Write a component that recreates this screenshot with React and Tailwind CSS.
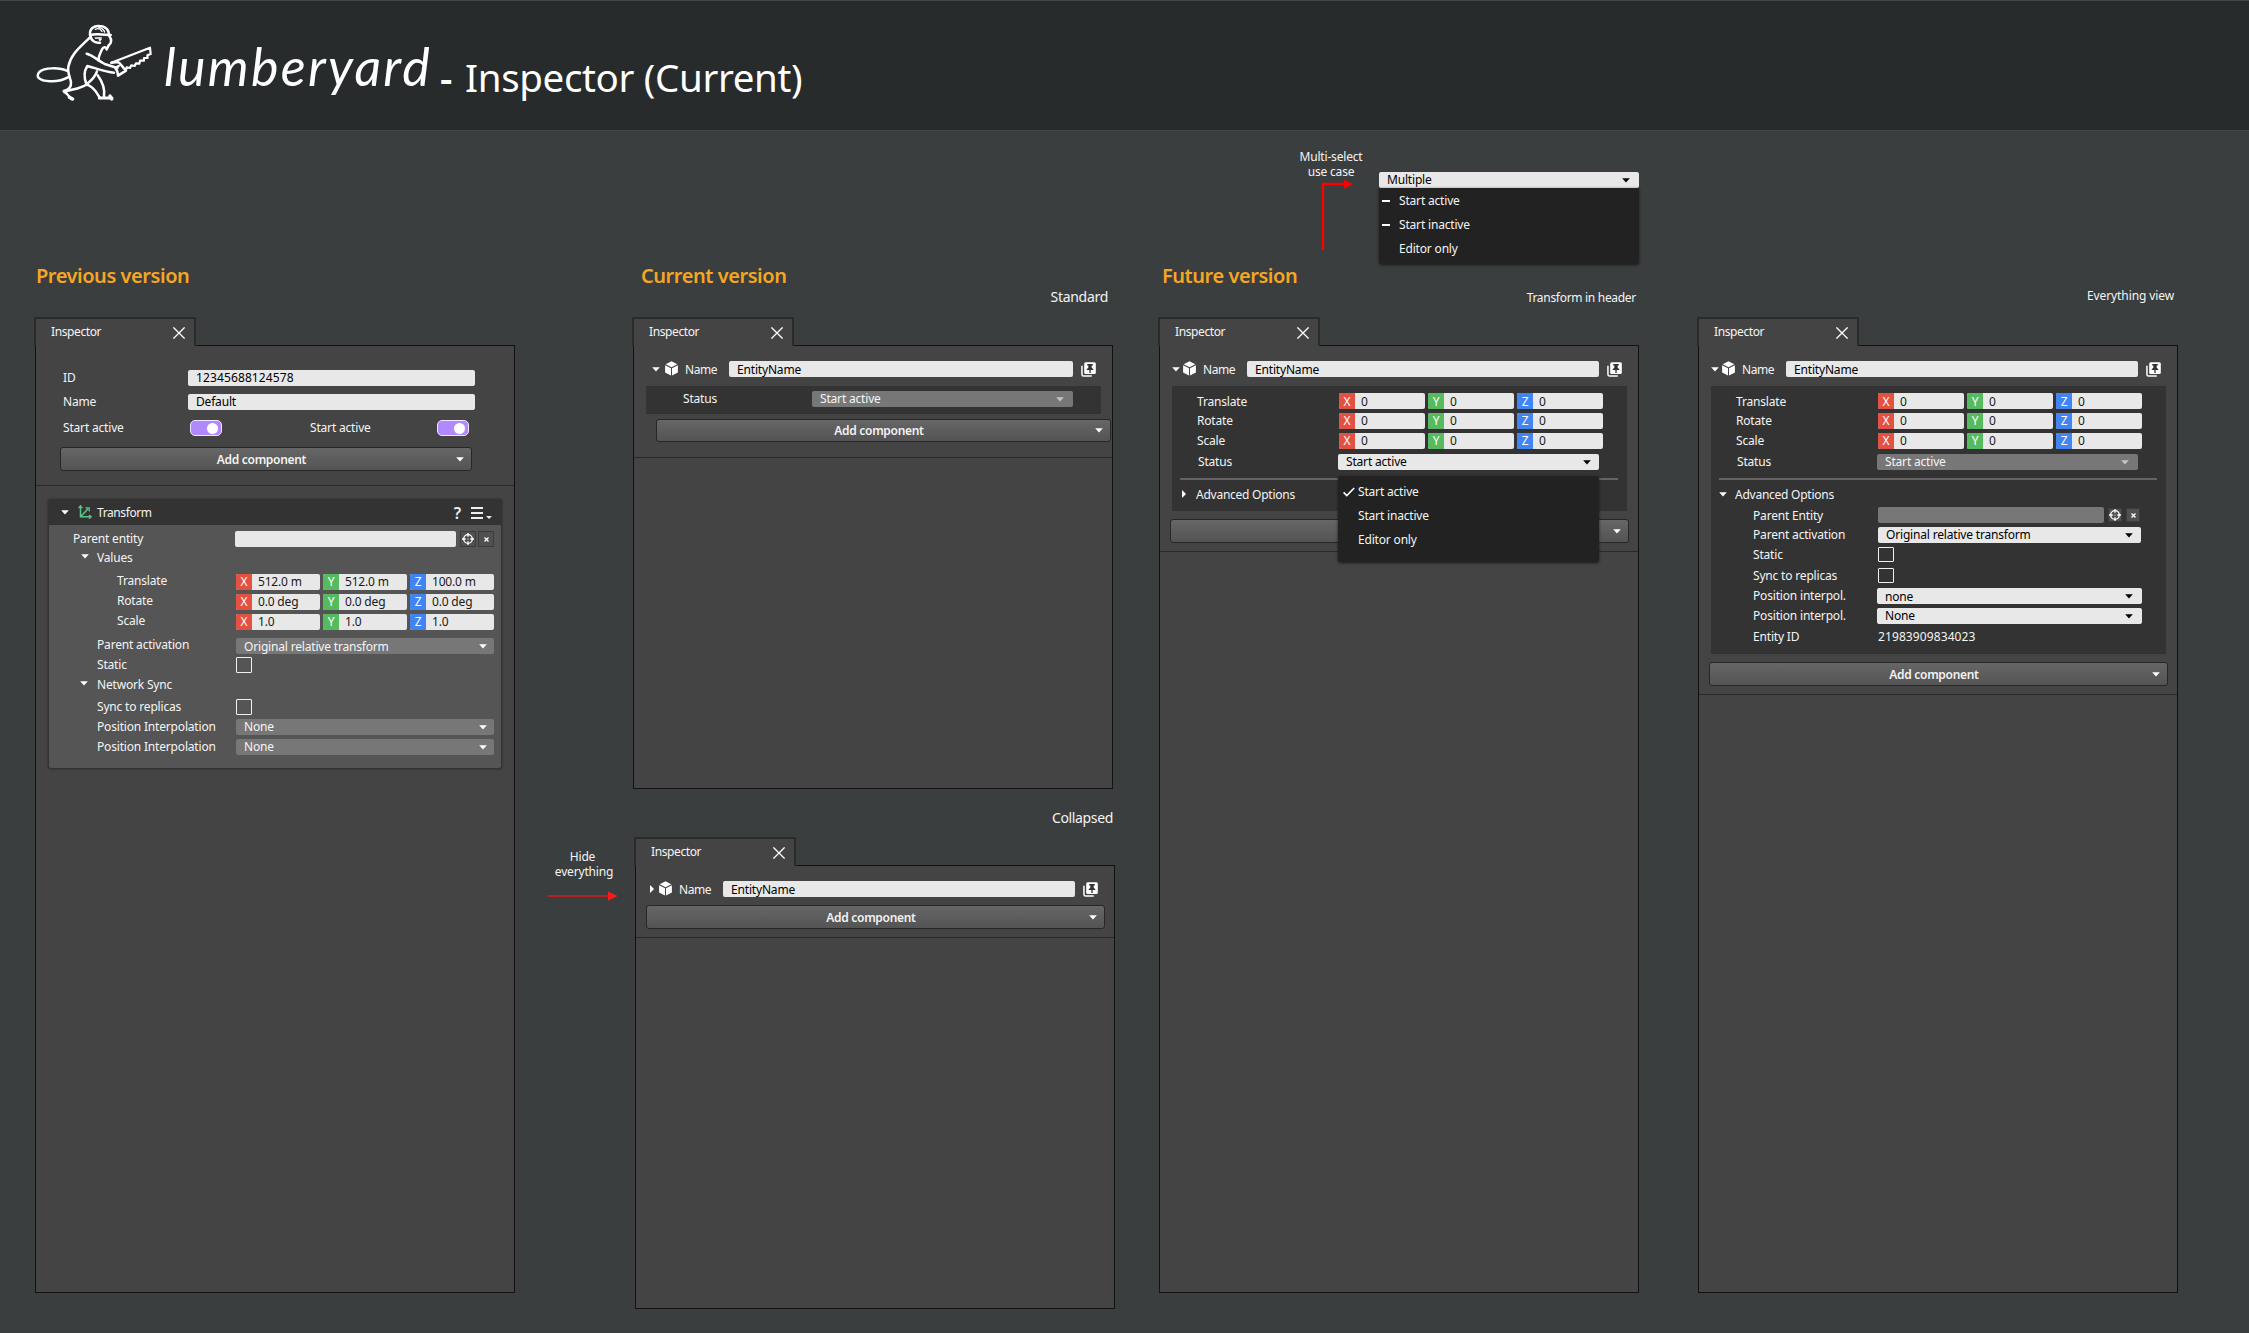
import React from "react";

const FONT = "font-['Noto_Sans','Open_Sans',sans-serif]";

/* ---------- icons ---------- */

function Down({ className = "text-white" }) {
  return (
    <svg viewBox="0 0 8 5" className={`h-[5px] w-2 shrink-0 ${className}`}>
      <path d="M0.2 0.3H7.8L4 4.6Z" fill="currentColor" />
    </svg>
  );
}

function Right() {
  return (
    <svg viewBox="0 0 4 8" className="h-2 w-1 shrink-0 text-white">
      <path d="M0 0L4 4L0 8Z" fill="currentColor" />
    </svg>
  );
}

function Close() {
  return (
    <svg viewBox="0 0 12 12" className="size-3 shrink-0">
      <path d="M0.4 0.4L11.6 11.6M11.6 0.4L0.4 11.6" stroke="#fff" strokeWidth="1.3" />
    </svg>
  );
}

function Cube() {
  return (
    <svg viewBox="0 0 13 15" className="h-[15px] w-[13px] shrink-0">
      <path d="M6.5 0.2L12.3 3.3L6.5 6.3L0.7 3.3Z" fill="#fff" />
      <path d="M0.1 4.2L6 7.2V14.4L0.1 11.4Z" fill="#fff" />
      <path d="M12.9 4.2L7 7.2V14.4L12.9 11.4Z" fill="#fff" />
    </svg>
  );
}

function Pin() {
  return (
    <svg viewBox="0 0 16 16" className="ml-2 size-[15px] shrink-0">
      <path d="M1 4V13.2Q1 15 2.8 15H11.5" fill="none" stroke="#fff" strokeWidth="1.6" />
      <rect x="3.4" y="0.2" width="12.4" height="12.6" rx="1.6" fill="#fff" />
      <path d="M6.6 2.2H12.6V3.6H11.4V6L13.2 7.6V8.6H10.3V11.6H8.9V8.6H6V7.6L7.8 6V3.6H6.6Z" fill="#333" />
    </svg>
  );
}

function Axes() {
  return (
    <svg viewBox="0 0 14 14" className="size-3.5 shrink-0" fill="none" stroke="#5ec48a" strokeWidth="1.5">
      <path d="M2.5 2V11.8H12M2.5 11.8L10.3 3.6" />
      <path d="M0.6 3.2L2.5 0.8L4.4 3.2M11 9.9L13.3 11.8L11 13.7M7.4 2.8H11.2V6.4" strokeWidth="1.3" />
    </svg>
  );
}

function Target() {
  return (
    <svg viewBox="0 0 12 12" className="size-3 shrink-0" fill="none" stroke="#fff">
      <circle cx="6" cy="6" r="4.3" strokeWidth="1.3" />
      <path d="M6 0V3.7M6 8.3V12M0 6H3.7M8.3 6H12" strokeWidth="1.3" />
      <circle cx="6" cy="6" r="0.6" fill="#fff" stroke="none" />
    </svg>
  );
}

function SmallX() {
  return (
    <svg viewBox="0 0 5 5" className="size-[5px] shrink-0">
      <path d="M0.5 0.5L4.5 4.5M4.5 0.5L0.5 4.5" stroke="#fff" strokeWidth="1.3" />
    </svg>
  );
}

function Beaver() {
  return (
    <svg
      viewBox="0 0 372 255"
      className="h-[85px] w-[124px] shrink-0"
      fill="none"
      stroke="#fff"
      strokeWidth="7.5"
      strokeLinecap="round"
      strokeLinejoin="round"
    >
      <path d="M112 159C90 148 42 148 28 162C16 176 26 188 60 190C84 191 104 184 118 176" />
      <path d="M180 58C150 88 122 108 115 146C112 166 121 180 123 192C124 206 118 216 101 219L111 228L124 243" />
      <path d="M103 222C124 214 152 212 168 200C184 188 196 176 201 160" />
      <path d="M170 201C160 176 164 156 172 144C196 150 226 162 252 164" />
      <path d="M170 107C190 112 204 128 224 138L262 150" />
      <path d="M172 200C196 210 200 226 209 238" />
      <path d="M203 172C216 190 226 212 222 236" />
      <path d="M208 240H246" strokeWidth="9" />
      <path d="M240 234L245 243M118 238L128 243" strokeWidth="10" />
      <path d="M180 50C178 32 194 22 208 24C226 24 238 36 236 50" />
      <path d="M180 51C198 46 222 50 242 51" />
      <path d="M196 34C204 30 212 34 216 40M206 28C218 30 222 36 224 42" strokeWidth="4" />
      <path d="M182 54C182 68 196 76 210 74M238 54C246 66 244 76 236 82L230 94C228 88 222 84 216 94C210 108 204 116 206 128" />
      <path d="M196 60H214" strokeWidth="4" />
      <circle cx="210" cy="65" r="3" fill="#fff" strokeWidth="2" />
      <path d="M244 134L360 89L362 108L352 112L353 120L342 120L342 128L330 128L328 137L318 136L314 144L304 142L300 150L290 148L288 156" strokeWidth="6.5" />
      <path d="M244 134L264 132C272 136 276 146 288 158L264 173L262 160L256 150L266 144" />
    </svg>
  );
}

/* ---------- controls ---------- */

function Label({ w, up = "", children }) {
  return <div className={`shrink-0 whitespace-nowrap text-[#f4f4f4] ${w} ${up}`}>{children}</div>;
}

function Field({ w, tone = "bg-[#e8e8e8]", className = "", children }) {
  return (
    <div className={`flex h-4 shrink-0 items-center rounded-[2px] pl-2 text-black ${w} ${tone} ${className}`}>
      {children}
    </div>
  );
}

function Select({ w, dim, faint, pr = "pr-[7px]", pt = "", children }) {
  return (
    <div
      className={`flex h-4 shrink-0 items-center justify-between rounded-[2px] pl-2 ${pr} ${w} ${
        dim ? "bg-[#777] text-[#f4f4f4]" : "bg-[#e8e8e8] text-black"
      }`}
    >
      <span className={pt}>{children}</span>
      <Down className={faint ? "text-[#c4c4c4]" : dim ? "text-white" : "text-black"} />
    </div>
  );
}

function Vector({ values, w, pt = "" }) {
  const tones = ["bg-[#e25141]", "bg-[#56bb5f]", "bg-[#4185f4]"];
  return (
    <div className="flex gap-[3px]">
      {values.map((v, i) => (
        <div key={i} className={`flex h-4 overflow-hidden rounded-[2px] bg-[#e8e8e8] ${w}`}>
          <div className={`flex w-4 items-center justify-center text-white ${tones[i]} ${pt}`}>{"XYZ"[i]}</div>
          <div className={`flex items-center pl-1.5 text-[#1a1a1a] ${pt}`}>{v}</div>
        </div>
      ))}
    </div>
  );
}

function Check({ h = "h-4" }) {
  return <div className={`w-4 shrink-0 rounded-[1px] border border-[#f0f0f0] ${h}`} />;
}

function Toggle() {
  return (
    <div className="flex h-4 w-8 shrink-0 items-center justify-end rounded-[5px] border border-[#efe6ff] bg-[#b288ff] pr-[3px]">
      <div className="size-[11px] rounded-full bg-white" />
    </div>
  );
}

function IconButton({ size, children }) {
  return (
    <div className={`flex shrink-0 items-center justify-center border border-[#3c3c3c] bg-[#505050] ${size}`}>
      {children}
    </div>
  );
}

function AddButton({ className, label = "Add component" }) {
  return (
    <div
      className={`flex items-center rounded-[3px] border border-[#272727] bg-linear-to-b from-[#666] to-[#545454] pr-[7px] pl-1.5 ${className}`}
    >
      <span className="flex-1 pt-px text-center font-semibold tracking-[-0.3px] text-[#f2f2f2]">{label}</span>
      <Down />
    </div>
  );
}

function Rule({ mt }) {
  return <div className={`h-px bg-[#2a2a2a] ${mt}`} />;
}

function Panel({ h, children }) {
  return (
    <div className="w-[481px]">
      <div className="relative z-10 -mb-px flex h-[29px] w-[162px] items-center border-x-2 border-t-2 border-[#2a2b2b] bg-[#444] pr-[9px] pl-[15px]">
        <span className="flex-1 pb-[2px] tracking-[-0.4px] text-[#f4f4f4]">Inspector</span>
        <Close />
      </div>
      <div className={`ml-px w-[480px] border border-[#111] bg-[#444] ${h}`}>{children}</div>
    </div>
  );
}

function NameRow({ pl, arrow, gap, w, field }) {
  return (
    <div className={`mt-[15px] flex h-4 items-center ${pl}`}>
      {arrow}
      <div className={`pb-[2px] ${gap}`}>
        <Cube />
      </div>
      <Label w={`ml-[7px] tracking-[-0.4px] ${w}`} up="pt-px">Name</Label>
      <Field w={field} className="pt-[2px]">EntityName</Field>
      <Pin />
    </div>
  );
}

function TransformRows() {
  return (
    <>
      {["Translate", "Rotate", "Scale"].map((name, i) => (
        <div key={name} className={`flex h-4 items-center pl-[25px] ${i ? "mt-1" : "mt-[7px]"}`}>
          <Label w="w-[142px]" up={i ? "" : "pt-[2px]"}>
            {name}
          </Label>
          <Vector w="w-[86px]" values={["0", "0", "0"]} pt={i ? "" : "pt-[2px]"} />
        </div>
      ))}
    </>
  );
}

function Heading({ ml, children }) {
  return (
    <div className={`h-7 pt-px text-[20px] leading-7 font-semibold tracking-[-0.45px] text-[#f5a623] ${ml}`}>
      {children}
    </div>
  );
}

/* ---------- columns ---------- */

function PreviousVersion() {
  return (
    <div className="ml-[34px] w-[481px]">
      <div className="h-[186px] pt-[130px]">
        <Heading ml="ml-[2px]">Previous version</Heading>
      </div>
      <Panel h="h-[948px]">
        <div className="mt-6 flex h-4 items-center pl-[27px]">
          <Label w="w-[125px]">ID</Label>
          <Field w="w-[287px]" className="tracking-[0.12px]">12345688124578</Field>
        </div>
        <div className="mt-2 flex h-4 items-center pl-[27px]">
          <Label w="w-[125px]">Name</Label>
          <Field w="w-[287px]">Default</Field>
        </div>
        <div className="mt-2.5 flex h-4 items-center pl-[27px]">
          <Label w="w-[127px]">Start active</Label>
          <Toggle />
          <Label w="ml-[88px] w-[127px]">Start active</Label>
          <Toggle />
        </div>
        <AddButton className="mt-[11px] ml-6 h-6 w-[412px]" />
        <Rule mt="mt-[14px]" />
        <div className="mt-[13px] ml-3 h-[270px] w-[454px] rounded-[3px] border border-[#333] bg-[#555] shadow-[0_0_2px_#222]">
          <div className="flex h-[25px] items-center bg-[#333] pr-[9px] pl-3">
            <Down />
            <div className="ml-[9px] pb-px">
              <Axes />
            </div>
            <Label w="ml-[5px] flex-1 tracking-[-0.4px]">Transform</Label>
            <span className="mr-2.5 text-[16px] font-semibold text-[#eee]">?</span>
            <div className="flex w-3 flex-col gap-[3px]">
              <div className="h-[2px] bg-[#eee]" />
              <div className="h-[2px] bg-[#eee]" />
              <div className="h-[2px] bg-[#eee]" />
            </div>
            <svg viewBox="0 0 6 3" className="mt-2.5 ml-[3px] h-[3px] w-1.5">
              <path d="M0 0H6L3 3Z" fill="#eee" />
            </svg>
          </div>
          <div className="mt-1.5 flex h-4 items-center pl-6">
            <Label w="w-[162px]">Parent entity</Label>
            <Field w="w-[221px]" />
            <div className="ml-1 flex gap-[2px]">
              <IconButton size="size-4"><Target /></IconButton>
              <IconButton size="size-4"><SmallX /></IconButton>
            </div>
          </div>
          <div className="mt-[2px] flex h-4 items-center pl-8">
            <div className="pb-[2px]">
              <Down />
            </div>
            <Label w="ml-2" up="pt-[2px]">Values</Label>
          </div>
          {[
            ["Translate", ["512.0 m", "512.0 m", "100.0 m"], "mt-[9px]"],
            ["Rotate", ["0.0 deg", "0.0 deg", "0.0 deg"], "mt-1"],
            ["Scale", ["1.0", "1.0", "1.0"], "mt-1"],
          ].map(([name, values, mt]) => (
            <div key={name} className={`flex h-4 items-center pl-[68px] ${mt}`}>
              <Label w="w-[119px]" up="pb-[2px]">{name}</Label>
              <Vector w="w-[84px]" values={values} />
            </div>
          ))}
          <div className="mt-2 flex h-4 items-center pl-12">
            <Label w="w-[139px]" up="pb-[2px]">Parent activation</Label>
            <Select w="w-[258px]" dim pt="pt-px">Original relative transform</Select>
          </div>
          <div className="mt-[3px] flex h-4 items-center pl-12">
            <Label w="w-[139px]">Static</Label>
            <Check />
          </div>
          <div className="mt-[3px] flex h-4 items-center pl-[31px]">
            <div className="pb-[2px]">
              <Down />
            </div>
            <Label w="ml-[9px]" up="pt-[2px]">Network Sync</Label>
          </div>
          <div className="mt-[7px] flex h-4 items-center pl-12">
            <Label w="w-[139px]">Sync to replicas</Label>
            <Check />
          </div>
          {[0, 1].map((i) => (
            <div key={i} className="mt-1 flex h-4 items-center pl-12">
              <Label w="w-[139px]">Position Interpolation</Label>
              <Select w="w-[258px]" dim>None</Select>
            </div>
          ))}
        </div>
      </Panel>
    </div>
  );
}

function HideNote() {
  return (
    <div className="w-[117px] pt-[718px] pl-[33px]">
      <div className="w-[72px] text-center leading-[15px] text-[#f4f4f4]">
        <span className="pr-[3px]">Hide</span>
        <br />
        everything
      </div>
      <svg viewBox="0 0 70 10" className="mt-3 h-2.5 w-[70px]">
        <path d="M0 5H61" stroke="#dd1b1b" strokeWidth="1.5" />
        <path d="M60 0.5L69.5 5L60 9.5Z" fill="#ff1a1a" />
      </svg>
    </div>
  );
}

function CurrentVersion() {
  return (
    <div className="w-[483px]">
      <div className="h-[186px] pt-[130px]">
        <Heading ml="ml-[9px]">Current version</Heading>
        <div className="pr-[7px] text-right text-[14px] leading-4 tracking-[-0.3px] text-[#f4f4f4]">Standard</div>
      </div>
      <Panel h="h-[444px]">
        <NameRow pl="pl-[18px]" arrow={<Down />} gap="ml-[5px]" w="w-11" field="w-[344px]" />
        <div className="mt-[9px] ml-3 flex h-7 w-[455px] items-center bg-[#333] pb-[2px] pl-[37px]">
          <Label w="w-[129px]">Status</Label>
          <Select w="w-[261px]" pr="pr-[9px]" dim faint>Start active</Select>
        </div>
        <AddButton className="mt-[5px] ml-[22px] h-[23px] w-[455px]" />
        <Rule mt="mt-[15px]" />
      </Panel>
      <div className="h-12 pt-[21px] pr-[2px] text-right text-[14px] leading-4 tracking-[-0.35px] text-[#f4f4f4]">
        Collapsed
      </div>
      <div className="ml-[2px]">
        <Panel h="h-[444px]">
          <NameRow pl="pl-[14px]" arrow={<Right />} gap="ml-[5px]" w="w-11" field="w-[352px]" />
          <AddButton className="mt-2 ml-2.5 h-6 w-[459px]" />
          <Rule mt="mt-2" />
        </Panel>
      </div>
    </div>
  );
}

function MultiSelect() {
  return (
    <div className="flex h-[130px] pt-[18px] pl-[141px]">
      <div className="w-[80px]">
        <div className="w-16 text-center leading-[15px] whitespace-nowrap text-[#f4f4f4]">
          Multi-select
          <br />
          use case
        </div>
        <svg viewBox="0 0 32 72" className="mt-px ml-[22px] h-[72px] w-8">
          <path d="M2 70V4H24" fill="none" stroke="#f00" strokeWidth="2.4" />
          <path d="M23 -0.3L32 4L23 8.5Z" fill="#f00" />
        </svg>
      </div>
      <div className="relative mt-[23px] h-4 w-[260px]">
        <Select w="w-[260px]" pr="pr-[9px]">Multiple</Select>
        <div className="absolute top-4 left-0 flex h-[76px] w-[260px] flex-col rounded-b-[3px] bg-[#222] pt-px shadow-[0_1px_3px_#1a1a1a]">
          {["Start active", "Start inactive", "Editor only"].map((t, i) => (
            <div key={t} className="flex h-6 items-center pl-[3px]">
              <div className={`h-[2px] w-2 ${i < 2 ? "bg-white" : ""}`} />
              <span className="ml-[9px] text-[#f4f4f4]">{t}</span>
            </div>
          ))}
        </div>
      </div>
    </div>
  );
}

function StatusMenu() {
  return (
    <div className="absolute top-[22px] left-0 z-20 h-[86px] w-[261px] rounded-[3px] bg-[#222] pt-1 shadow-[0_1px_3px_#1a1a1a]">
      {["Start active", "Start inactive", "Editor only"].map((t, i) => (
        <div key={t} className="flex h-6 items-center pl-[5px]">
          <svg viewBox="0 0 12 10" className="h-2.5 w-3">
            {i === 0 && <path d="M0.6 5.4L3.8 8.6L11.2 1" fill="none" stroke="#fff" strokeWidth="1.7" />}
          </svg>
          <span className="ml-[3px] text-[#f4f4f4]">{t}</span>
        </div>
      ))}
    </div>
  );
}

function FutureVersion() {
  return (
    <div className="ml-[43px] w-[481px]">
      <div className="h-[186px]">
        <MultiSelect />
        <Heading ml="ml-[4px]">Future version</Heading>
        <div className="pt-px pr-[3px] text-right leading-4 tracking-[-0.3px] text-[#f4f4f4]">Transform in header</div>
      </div>
      <Panel h="h-[948px]">
        <NameRow pl="pl-3" arrow={<Down />} gap="ml-[3px]" w="w-11" field="w-[352px]" />
        <div className="mt-[9px] ml-3 flex h-[125px] w-[455px] flex-col bg-[#333]">
          <TransformRows />
          <div className="mt-[5px] flex h-4 items-center pl-[26px]">
            <Label w="w-[140px]">Status</Label>
            <div className="relative">
              <Select w="w-[261px]" pr="pr-[8px]">Start active</Select>
              <StatusMenu />
            </div>
          </div>
          <div className="mt-2 ml-2 h-[2px] w-[438px] bg-[#646464]" />
          <div className="mt-1.5 flex h-4 items-center pl-2.5">
            <Right />
            <Label w="ml-2.5 tracking-[-0.25px]" up="pt-[2px]">Advanced Options</Label>
          </div>
        </div>
        <AddButton className="mt-2 ml-2.5 h-6 w-[459px]" label="" />
        <Rule mt="mt-2" />
      </Panel>
    </div>
  );
}

function EverythingView() {
  return (
    <div className="ml-[58px] w-[481px]">
      <div className="h-[186px] pt-[157px]">
        <div className="pr-[4px] text-right leading-4 tracking-[-0.1px] text-[#f4f4f4]">Everything view</div>
      </div>
      <Panel h="h-[948px]">
        <NameRow pl="pl-3" arrow={<Down />} gap="ml-[3px]" w="w-11" field="w-[352px]" />
        <div className="mt-[9px] ml-3 flex h-[268px] w-[455px] flex-col bg-[#333]">
          <TransformRows />
          <div className="mt-[5px] flex h-4 items-center pl-[26px]">
            <Label w="w-[140px]">Status</Label>
            <Select w="w-[261px]" pr="pr-[9px]" dim faint>Start active</Select>
          </div>
          <div className="mt-2 ml-2 h-[2px] w-[438px] bg-[#646464]" />
          <div className="mt-1.5 flex h-4 items-center pl-2">
            <Down />
            <Label w="ml-2 tracking-[-0.25px]" up="pt-[2px]">Advanced Options</Label>
          </div>
          <div className="mt-[5px] flex h-4 items-center pl-[42px]">
            <Label w="w-[125px]" up="pt-[2px]">Parent Entity</Label>
            <Field w="w-[226px]" tone="bg-[#777]" />
            <div className="ml-1 flex gap-1">
              <IconButton size="size-3.5"><Target /></IconButton>
              <IconButton size="size-3.5"><SmallX /></IconButton>
            </div>
          </div>
          <div className="mt-1 flex h-4 items-center pl-[42px]">
            <Label w="w-[125px]">Parent activation</Label>
            <Select w="w-[263px]" pr="pr-[8px]">Original relative transform</Select>
          </div>
          <div className="mt-1 flex h-[15px] items-center pl-[42px]">
            <Label w="w-[125px]">Static</Label>
            <Check h="h-[15px]" />
          </div>
          <div className="mt-1.5 flex h-[15px] items-center pl-[42px]">
            <Label w="w-[125px]" up="pt-px">Sync to replicas</Label>
            <Check h="h-[15px]" />
          </div>
          <div className="mt-[5px] flex h-4 items-center pl-[42px]">
            <Label w="w-[124px]">Position interpol.</Label>
            <Select w="w-[265px]" pr="pr-[9px]" pt="pt-[2px]">none</Select>
          </div>
          <div className="mt-1 flex h-4 items-center pl-[42px]">
            <Label w="w-[124px]">Position interpol.</Label>
            <Select w="w-[265px]" pr="pr-[9px]">None</Select>
          </div>
          <div className="mt-1 flex h-4 items-center pl-[42px]">
            <Label w="w-[125px]" up="pt-[2px]">Entity ID</Label>
            <Label w="tracking-[0.1px]" up="pt-[2px]">21983909834023</Label>
          </div>
        </div>
        <AddButton className="mt-2 ml-2.5 h-6 w-[459px]" />
        <Rule mt="mt-2" />
      </Panel>
    </div>
  );
}

export default function App() {
  return (
    <div
      className={`h-[1333px] w-[2249px] overflow-hidden bg-[#3b3e3f] text-[12px] leading-4 tracking-[-0.18px] ${FONT}`}
    >
      <header className="flex h-[131px] border-y border-[#424647] bg-[#272b2c] pt-[17px] pl-[30px] text-white">
        <Beaver />
        <span className="ml-[10px] w-[268px] pt-[16px] font-['Lato',sans-serif] text-[52px] leading-[64px] tracking-[2.3px] italic">
          lumberyard
        </span>
        <h1 className="ml-[8px] flex pt-[27px] text-[38.5px] leading-[64px] tracking-[-0.35px] whitespace-nowrap">
          <span className="w-[25px] font-semibold">-</span>
          <span>Inspector (Current)</span>
        </h1>
      </header>
      <main className="flex">
        <PreviousVersion />
        <HideNote />
        <CurrentVersion />
        <FutureVersion />
        <EverythingView />
      </main>
    </div>
  );
}
